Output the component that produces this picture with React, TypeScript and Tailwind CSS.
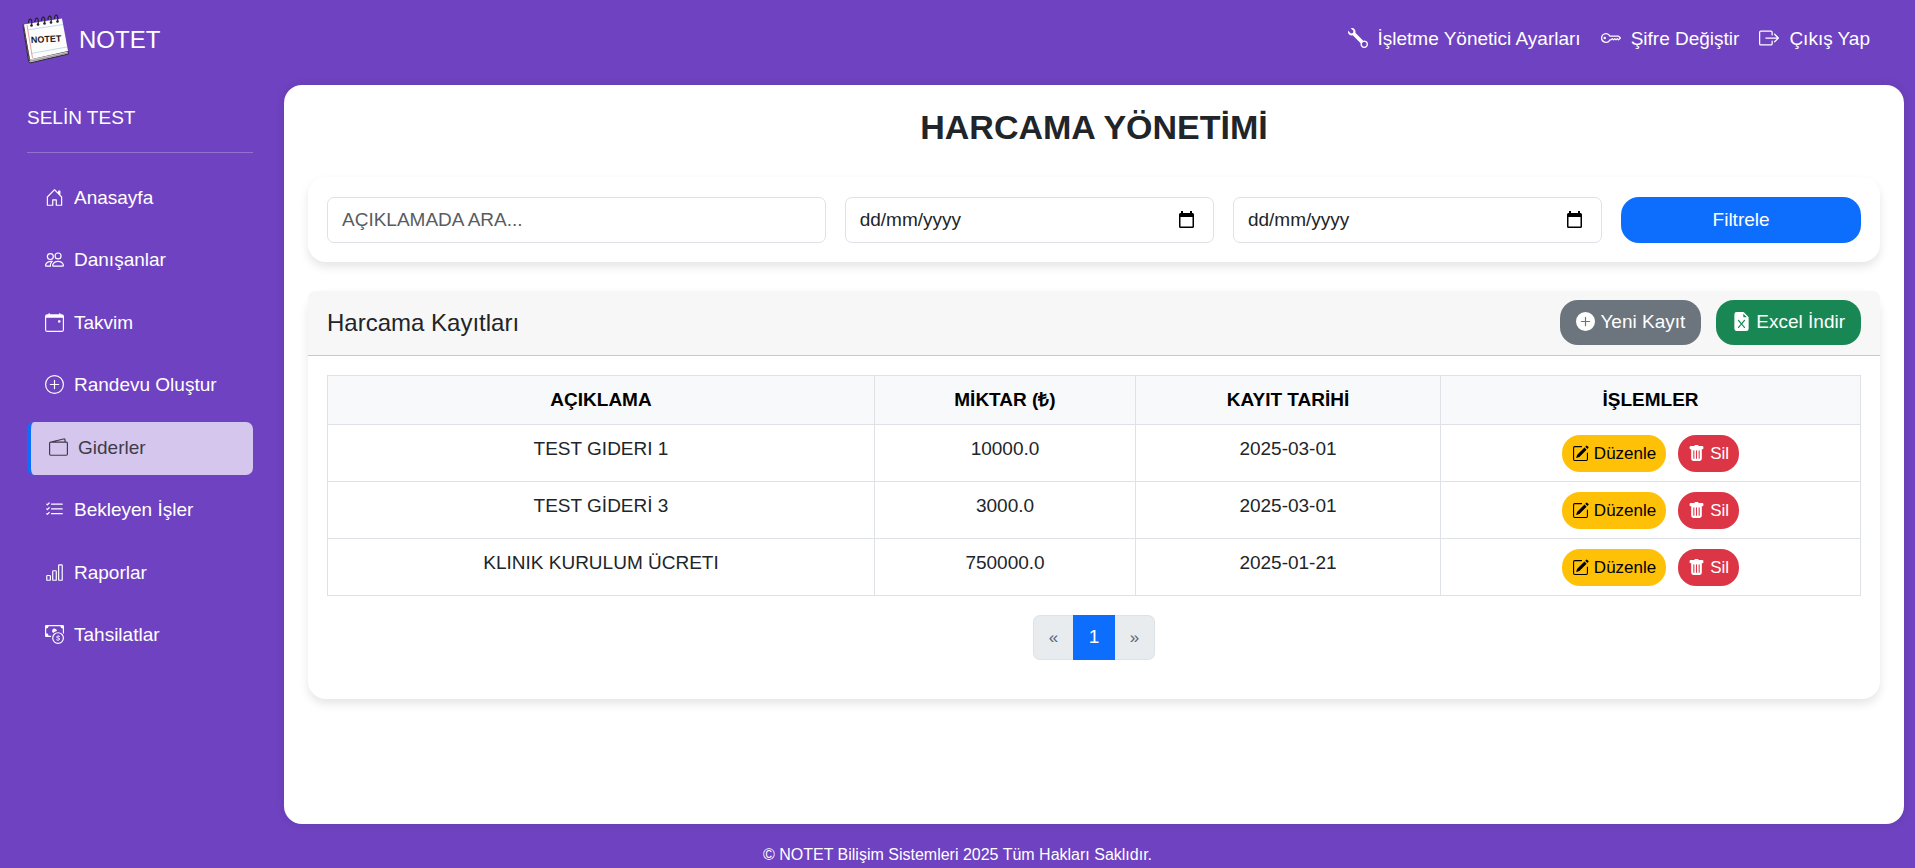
import { useState } from "react";
import type { IconType } from "react-icons";
import {
  BsBarChart,
  BsBoxArrowRight,
  BsCalendarEvent,
  BsCashCoin,
  BsFileEarmarkExcelFill,
  BsHouseDoor,
  BsKey,
  BsListCheck,
  BsPencilSquare,
  BsPeople,
  BsPlusCircle,
  BsPlusCircleFill,
  BsTrashFill,
  BsWallet2,
  BsWrench,
} from "react-icons/bs";

interface Expense {
  id: number;
  description: string;
  amount: string;
  date: string;
}

interface NavItem {
  label: string;
  icon: IconType;
}

const topLinks: NavItem[] = [
  { label: "İşletme Yönetici Ayarları", icon: BsWrench },
  { label: "Şifre Değiştir", icon: BsKey },
  { label: "Çıkış Yap", icon: BsBoxArrowRight },
];

const menu: NavItem[] = [
  { label: "Anasayfa", icon: BsHouseDoor },
  { label: "Danışanlar", icon: BsPeople },
  { label: "Takvim", icon: BsCalendarEvent },
  { label: "Randevu Oluştur", icon: BsPlusCircle },
  { label: "Giderler", icon: BsWallet2 },
  { label: "Bekleyen İşler", icon: BsListCheck },
  { label: "Raporlar", icon: BsBarChart },
  { label: "Tahsilatlar", icon: BsCashCoin },
];

const initialExpenses: Expense[] = [
  { id: 1, description: "TEST GIDERI 1", amount: "10000.0", date: "2025-03-01" },
  { id: 2, description: "TEST GİDERİ 3", amount: "3000.0", date: "2025-03-01" },
  { id: 3, description: "KLINIK KURULUM ÜCRETI", amount: "750000.0", date: "2025-01-21" },
];

function Logo() {
  return (
    <svg viewBox="0 0 48 52" className="w-12 h-[52px] shrink-0" aria-hidden="true">
      <path d="M1 12 L2 11 L8 46 L46 38 L46.5 41 L8 50 L6.5 48 Z" fill="#cfcbd0" stroke="#2c2633" strokeWidth="1" />
      <path d="M1.5 11.5 L40 5.5 L46 38 L8 46.5 Z" fill="#fdfdfb" />
      <path d="M1.5 11.5 L7.5 48" stroke="#4a3c44" strokeWidth="1" />
      <path d="M8 48.3 L46 40" stroke="#77727c" strokeWidth="0.6" />
      <path d="M5 17 L41 11.5 M9 40.5 L45 34" stroke="#b3d3ec" strokeWidth="0.8" />
      <path d="M5 12 L10.5 45" stroke="#e58a92" strokeWidth="0.8" />
      {[8, 14.5, 21, 27.5, 34].map((x, i) => (
        <g key={x}>
          <circle cx={x + 1.5} cy={12.5 - i} r="1.3" fill="#26222b" />
          <path
            d={`M${x + 1.5} ${12.5 - i} q1 -5 -1 -6.5 q-2 0 -2 4`}
            fill="none"
            stroke="#26222b"
            strokeWidth="1.2"
          />
        </g>
      ))}
      <text
        x="9"
        y="30"
        transform="rotate(-3 9 30)"
        fontSize="9"
        fontWeight="bold"
        fontFamily="Liberation Sans, Arial, sans-serif"
        fill="#1c1a20"
      >
        NOTET
      </text>
    </svg>
  );
}

function DateField({ label }: { label: string }) {
  const [value, setValue] = useState("");
  return (
    <div className="col-span-3 flex items-center h-[46px] pl-[14px] pr-[19px] pb-[2px] border border-[#dee2e6] rounded-[7px] bg-white">
      <input
        type="text"
        aria-label={label}
        placeholder="dd/mm/yyyy"
        value={value}
        onChange={(e) => setValue(e.target.value)}
        className="flex-1 min-w-0 outline-none placeholder:text-[#212529]"
      />
      <button type="button" aria-label={`${label} seç`}>
        <svg viewBox="0 0 15 17" className="w-[15px] h-[17px]">
          <path
            d="M2 0h2v2h7V0h2v2h.5A1.5 1.5 0 0 1 15 3.5V15.5A1.5 1.5 0 0 1 13.5 17H1.5A1.5 1.5 0 0 1 0 15.5V3.5A1.5 1.5 0 0 1 1.5 2H2zM1.5 6v9.5h12V6z"
            fill="#000"
            fillRule="evenodd"
          />
        </svg>
      </button>
    </div>
  );
}

function Header() {
  return (
    <header className="flex items-center justify-between h-[85px] pl-[22px] pr-[45px] pb-[7px]">
      <a href="#" className="flex items-center gap-[9px] text-[24px]">
        <Logo />
        NOTET
      </a>
      <nav className="flex items-center gap-5 pb-[2px]">
        {topLinks.map(({ label, icon: Icon }) => (
          <a key={label} href="#" className="flex items-center gap-[10px]">
            <Icon className="w-5 h-5" />
            {label}
          </a>
        ))}
      </nav>
    </header>
  );
}

function Sidebar() {
  const [active, setActive] = useState("Giderler");
  return (
    <aside className="w-[284px] shrink-0 pl-[27px] pr-[31px]">
      <p className="pt-[19px] pb-[21px] border-b border-white/25">SELİN TEST</p>
      <nav className="flex flex-col justify-between h-[490px] mt-[19px]">
        {menu.map(({ label, icon: Icon }) => (
          <a
            key={label}
            href="#"
            onClick={() => setActive(label)}
            className={`flex items-center gap-[10px] h-[53px] px-[18px] pb-[2px] rounded-[7px] ${
              active === label ? "bg-white/70 text-[#3f3b49] border-l-4 border-[#0d6efd]" : "text-white"
            }`}
          >
            <Icon className="w-[19px] h-[19px]" />
            {label}
          </a>
        ))}
      </nav>
    </aside>
  );
}

function ExpenseTable({ expenses, onDelete }: { expenses: Expense[]; onDelete: (id: number) => void }) {
  const head = "border border-[#dee2e6] px-[10px] pt-[10px] pb-[11px]";
  const cell = "border border-[#dee2e6] px-[10px] pt-[10px] pb-[9px]";
  return (
    <table className="w-full table-fixed border-collapse text-center">
      <thead className="bg-[#f8f9fa] text-black">
        <tr>
          <th className={`${head} w-[547px]`}>AÇIKLAMA</th>
          <th className={`${head} w-[261px]`}>MİKTAR (₺)</th>
          <th className={`${head} w-[305px]`}>KAYIT TARİHİ</th>
          <th className={`${head} w-[420px]`}>İŞLEMLER</th>
        </tr>
      </thead>
      <tbody className="align-top">
        {expenses.map((e) => (
          <tr key={e.id}>
            <td className={cell}>{e.description}</td>
            <td className={cell}>{e.amount}</td>
            <td className={cell}>{e.date}</td>
            <td className={cell}>
              <div className="flex justify-center gap-3 text-[17px]">
                <button
                  type="button"
                  className="flex items-center gap-[5px] h-[37px] px-[10px] rounded-[18px] bg-[#ffc107] text-black"
                >
                  <BsPencilSquare className="w-[17px] h-[17px]" />
                  Düzenle
                </button>
                <button
                  type="button"
                  onClick={() => onDelete(e.id)}
                  className="flex items-center gap-[5px] h-[37px] px-[10px] rounded-[18px] bg-[#dc3545] text-white"
                >
                  <BsTrashFill className="w-[17px] h-[17px]" />
                  Sil
                </button>
              </div>
            </td>
          </tr>
        ))}
      </tbody>
    </table>
  );
}

export default function App() {
  const [search, setSearch] = useState("");
  const [expenses, setExpenses] = useState(initialExpenses);

  return (
    <div className="min-h-screen flex flex-col bg-[#6f42c1] text-white text-[19px] leading-[27px] font-['Liberation_Sans',Arial,sans-serif]">
      <Header />
      <div className="flex flex-1">
        <Sidebar />
        <main className="flex-1 min-w-0 mr-[11px] px-6 pt-[22px] pb-6 bg-white text-[#212529] rounded-[18px] shadow-[0_0_10px_rgba(0,0,0,0.1)]">
          <h1 className="text-center text-[34px] leading-[40px] font-bold mb-[30px]">HARCAMA YÖNETİMİ</h1>

          {/* Filter */}
          <form
            onSubmit={(e) => e.preventDefault()}
            className="grid grid-cols-12 gap-[19px] px-[19px] pt-[20px] pb-[19px] mb-[29px] rounded-[18px] shadow-[0_5px_10px_rgba(0,0,0,0.1)]"
          >
            <input
              type="text"
              aria-label="Açıklamada ara"
              placeholder="AÇIKLAMADA ARA..."
              value={search}
              onChange={(e) => setSearch(e.target.value)}
              className="col-span-4 h-[46px] px-[14px] border border-[#dee2e6] rounded-[7px] outline-none placeholder:text-[#595c5f]"
            />
            <DateField label="Başlangıç tarihi" />
            <DateField label="Bitiş tarihi" />
            <button type="submit" className="col-span-2 h-[46px] pb-[2px] rounded-[18px] bg-[#0d6efd] text-white">
              Filtrele
            </button>
          </form>

          {/* Records */}
          <section className="rounded-[18px] shadow-[0_5px_10px_rgba(0,0,0,0.1)]">
            <div className="flex items-center justify-between h-[65px] px-[19px] pb-[2px] bg-[#f7f7f7] border-b border-[#c9c9c9] rounded-t-[7px]">
              <h2 className="text-[24px]">Harcama Kayıtları</h2>
              <div className="flex gap-[15px]">
                <button
                  type="button"
                  className="flex items-center gap-[5px] h-[45px] px-4 pb-[2px] rounded-[18px] bg-[#6c757d] text-white"
                >
                  <BsPlusCircleFill className="w-[19px] h-[19px]" />
                  Yeni Kayıt
                </button>
                <button
                  type="button"
                  className="flex items-center gap-[5px] h-[45px] px-4 pb-[2px] rounded-[18px] bg-[#198754] text-white"
                >
                  <BsFileEarmarkExcelFill className="w-[19px] h-[19px]" />
                  Excel İndir
                </button>
              </div>
            </div>
            <div className="px-[19px] pt-[19px] pb-[39px]">
              <ExpenseTable
                expenses={expenses}
                onDelete={(id) => setExpenses((prev) => prev.filter((e) => e.id !== id))}
              />
              <nav aria-label="Sayfalar" className="flex justify-center mt-[19px]">
                <button
                  type="button"
                  disabled
                  className="w-10 h-[45px] rounded-l-[7px] border border-r-0 border-[#dee2e6] bg-[#e9ecef] text-[#5c636a] text-[17px]"
                >
                  «
                </button>
                <button type="button" className="w-[42px] h-[45px] pb-[2px] bg-[#0d6efd] text-white">
                  1
                </button>
                <button
                  type="button"
                  disabled
                  className="w-10 h-[45px] rounded-r-[7px] border border-l-0 border-[#dee2e6] bg-[#e9ecef] text-[#5c636a] text-[17px]"
                >
                  »
                </button>
              </nav>
            </div>
          </section>
        </main>
      </div>
      <footer className="pt-[18px] pb-[1px] text-center text-[16px] leading-[25px]">
        © NOTET Bilişim Sistemleri 2025 Tüm Hakları Saklıdır.
      </footer>
    </div>
  );
}
